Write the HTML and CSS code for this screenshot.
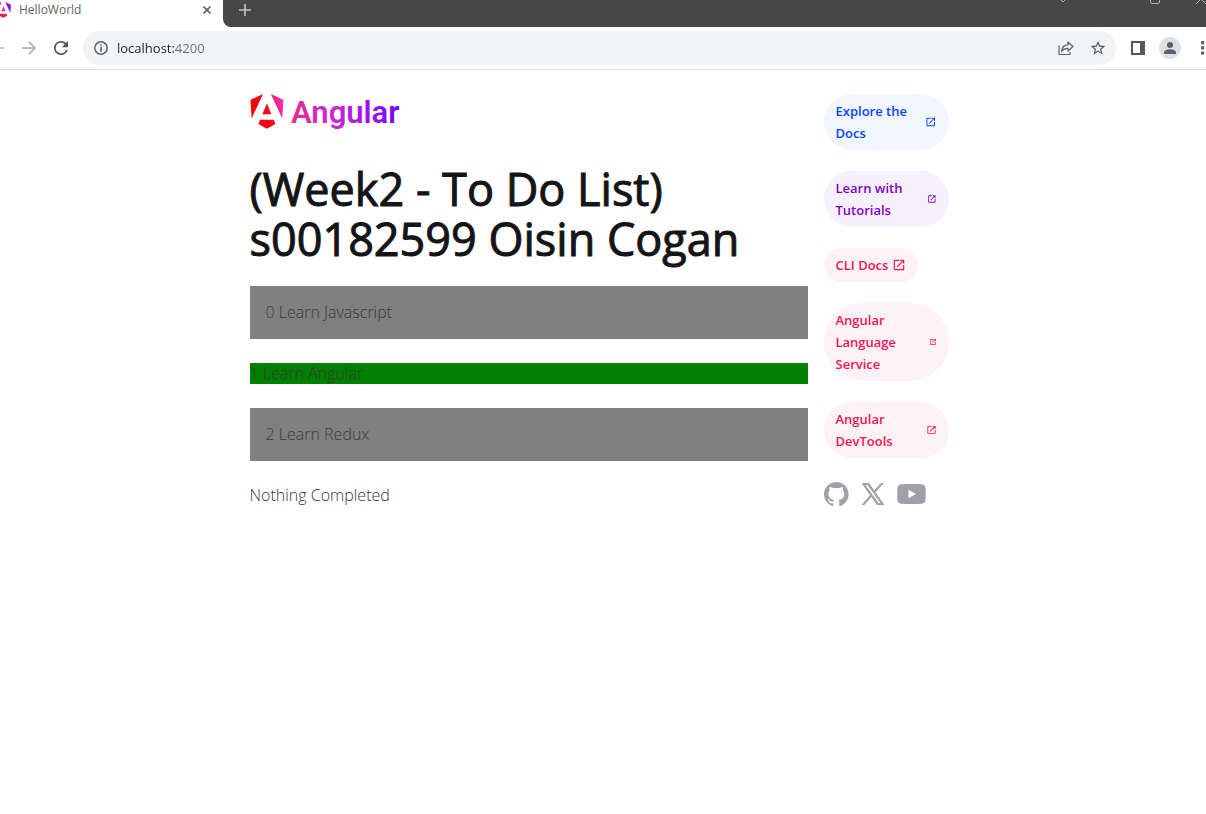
FILE: index.html
```html
<!DOCTYPE html>
<html lang="en">
<head>
<meta charset="utf-8">
<meta name="viewport" content="width=device-width, initial-scale=1">
<title>HelloWorld</title>
<link rel="stylesheet" href="styles.css">
</head>
<body>
<svg width="0" height="0" class="sprite" aria-hidden="true">
  <symbol id="external" viewBox="0 -960 960 960">
    <path d="M200-120q-33 0-56.5-23.5T120-200v-560q0-33 23.5-56.5T200-840h280v80H200v560h560v-280h80v280q0 33-23.5 56.5T760-120H200Zm188-212-56-56 372-372H560v-80h280v280h-80v-144L388-332Z"/>
  </symbol>
  <symbol id="shield" viewBox="0 0 223 236">
    <path d="m222.077 39.192-8.019 125.923L137.387 0l84.69 39.192Zm-53.105 162.825-57.933 33.056-57.934-33.056 11.783-28.556h92.301l11.783 28.556ZM111.039 62.675l30.357 73.803H80.681l30.358-73.803ZM7.937 165.115 0 39.192 84.69 0 7.937 165.115Z"/>
  </symbol>
</svg>

<header class="browser">
  <div class="tabstrip">
    <div class="tab">
      <svg class="favicon" viewBox="0 0 223 236" aria-hidden="true">
        <defs><linearGradient id="fav" x1="0" y1="1" x2="1" y2="0"><stop offset="0.2" stop-color="#f0083a"/><stop offset="0.5" stop-color="#e62bb0"/><stop offset="0.75" stop-color="#8514f5"/></linearGradient></defs>
        <use href="#shield" fill="url(#fav)"/>
      </svg>
      <span class="tab-title">HelloWorld</span>
      <button class="icon-btn tab-close" aria-label="Close tab"><svg width="8" height="8" viewBox="0 0 8 8"><path d="M.5.5l7 7M7.500.5l-7 7" stroke="#5f6368" stroke-width="1.600"/></svg></button>
    </div>
    <div class="strip-rest">
      <button class="icon-btn" aria-label="New tab"><svg width="12" height="12" viewBox="0 0 12 12"><path d="M6 0v12M0 6h12" stroke="#c4c4c4" stroke-width="1.600"/></svg></button>
      <div class="window-controls">
        <button class="icon-btn" aria-label="Search tabs"><svg width="10" height="10" viewBox="0 0 10 10"><path d="M1 4l4 4 4-4" fill="none" stroke="#b4b4b4"/></svg></button>
        <button class="icon-btn" aria-label="Maximize"><svg width="10" height="10" viewBox="0 0 10 10"><rect x=".5" y=".5" width="9" height="9" rx="1.500" fill="none" stroke="#b4b4b4"/></svg></button>
        <button class="icon-btn" aria-label="Close window"><svg width="10" height="10" viewBox="0 0 10 10"><path d="M0 0l10 10M10 0L0 10" stroke="#b4b4b4"/></svg></button>
      </div>
    </div>
  </div>
  <div class="toolbar">
    <button class="icon-btn back" aria-label="Back"><svg width="14" height="14" viewBox="0 0 14 14"><path d="M14 7H1M7 1L1 7l6 6" fill="none" stroke="#b5b7ba" stroke-width="1.600"/></svg></button>
    <button class="icon-btn forward" aria-label="Forward"><svg width="14" height="14" viewBox="0 0 14 14"><path d="M0 7h13M7 1l6 6-6 6" fill="none" stroke="#b5b7ba" stroke-width="1.800"/></svg></button>
    <button class="icon-btn reload" aria-label="Reload"><svg width="14" height="14" viewBox="4 4 16 16"><path fill="#54585d" d="M17.650 6.350A7.950 7.950 0 0 0 12 4a8 8 0 1 0 7.730 10h-2.080A6 6 0 1 1 12 6c1.660 0 3.140.69 4.220 1.780L13 11h7V4l-2.350 2.350z"/></svg></button>
    <div class="omnibox">
      <svg width="14" height="14" viewBox="0 0 14 14" aria-hidden="true"><circle cx="7" cy="7" r="6.200" fill="none" stroke="#5f6368" stroke-width="1.500"/><path d="M7 3.200v1.600M7 6v4.800" stroke="#5f6368" stroke-width="1.700"/></svg>
      <input class="address" type="text" aria-label="Address" value="localhost:4200">
      <button class="icon-btn" aria-label="Share"><svg width="16" height="14" viewBox="0 0 16 14"><path d="M1 4.500v9h11V11M10 1l5 4.500L10 10V7.400C7 7.300 5 8.300 3.600 10.300 4 6.700 6.300 4.100 10 3.700z" fill="none" stroke="#5f6368" stroke-width="1.200" stroke-linejoin="round"/></svg></button>
      <button class="icon-btn" aria-label="Bookmark"><svg width="16" height="16" viewBox="1 1 22 22"><path fill="#54585d" d="M22 9.240l-7.190-.62L12 2 9.190 8.630 2 9.240l5.460 4.730L5.820 21 12 17.270 18.180 21l-1.630-7.030L22 9.240zM12 15.400l-3.760 2.270 1-4.280-3.320-2.880 4.380-.38L12 6.100l1.710 4.040 4.380.38-3.320 2.880 1 4.280L12 15.400z"/></svg></button>
    </div>
    <button class="icon-btn panel" aria-label="Side panel"><svg width="14" height="14" viewBox="0 0 14 14"><path fill="#54585d" fill-rule="evenodd" d="M0 0h14v14H0zM2 2v10h7V2z"/></svg></button>
    <button class="icon-btn profile" aria-label="Profile"><svg width="22" height="22" viewBox="0 0 22 22"><circle cx="11" cy="11" r="11" fill="#dde1e7"/><circle cx="11" cy="8" r="3" fill="#56606f"/><path d="M5 17v-1.500C5 13 8.500 12.200 11 12.200s6 .8 6 3.300V17z" fill="#56606f"/></svg></button>
    <button class="icon-btn menu" aria-label="Menu"><svg width="4" height="14" viewBox="0 0 4 14"><path fill="#5f6368" d="M0 0h3.200v3.200H0zM0 5.200h3.200v3.200H0zM0 10.400h3.200v3.200H0z"/></svg></button>
  </div>
</header>

<main class="main">
  <section class="left">
    <svg class="logo" width="150" height="38" viewBox="0 0 150 38" role="img" aria-label="Angular">
      <defs>
        <linearGradient id="mark" x1="0" y1="0.500" x2="1" y2="0.100"><stop offset="0.400" stop-color="#f0060b"/><stop offset="1" stop-color="#f637d0"/></linearGradient>
        <linearGradient id="word" gradientUnits="userSpaceOnUse" x1="41" y1="34" x2="148" y2="20"><stop offset="0" stop-color="#e62b8b"/><stop offset="0.400" stop-color="#cc26d5"/><stop offset="1" stop-color="#7702ff"/></linearGradient>
      </defs>
      <use href="#shield" width="34" height="35" fill="url(#mark)"/>
      <text class="wordmark" x="41" y="29" fill="url(#word)">Angular</text>
    </svg>
    <h1 class="title">(Week2 - To Do List) s00182599 Oisin Cogan</h1>
    <ul class="todos">
      <li class="todo">0 Learn Javascript</li>
      <li class="todo done">1 Learn Angular</li>
      <li class="todo">2 Learn Redux</li>
    </ul>
    <p class="status">Nothing Completed</p>
  </section>
  <aside class="right">
    <nav class="pills">
      <a class="pill blue" href="#"><span>Explore the Docs</span><svg width="14" height="14"><use href="#external"/></svg></a>
      <a class="pill violet" href="#"><span>Learn with Tutorials</span><svg width="14" height="14"><use href="#external"/></svg></a>
      <a class="pill red" href="#"><span>CLI Docs</span><svg width="14" height="14"><use href="#external"/></svg></a>
      <a class="pill red" href="#"><span>Angular Language Service</span><svg width="14" height="14"><use href="#external"/></svg></a>
      <a class="pill red" href="#"><span>Angular DevTools</span><svg width="14" height="14"><use href="#external"/></svg></a>
    </nav>
    <div class="social">
      <a href="#" aria-label="Github"><svg width="25" height="24" viewBox="0 0 25 24"><path d="M12.3047 0C5.50634 0 0 5.50942 0 12.3047C0 17.7423 3.52529 22.3535 8.41332 23.9787C9.02856 24.0946 9.25414 23.7142 9.25414 23.3871C9.25414 23.0949 9.24389 22.3207 9.23876 21.2953C5.81601 22.0377 5.09414 19.6444 5.09414 19.6444C4.53427 18.2243 3.72524 17.8449 3.72524 17.8449C2.61064 17.082 3.81137 17.0973 3.81137 17.0973C5.04697 17.1835 5.69604 18.3647 5.69604 18.3647C6.79321 20.2463 8.57636 19.7029 9.27978 19.3881C9.39052 18.5924 9.70736 18.0499 10.0591 17.7423C7.32641 17.4347 4.45429 16.3765 4.45429 11.6618C4.45429 10.3185 4.9311 9.22133 5.72065 8.36C5.58222 8.04931 5.16694 6.79833 5.82831 5.10337C5.82831 5.10337 6.85883 4.77319 9.2121 6.36459C10.1965 6.09082 11.2424 5.95546 12.2883 5.94931C13.3342 5.95546 14.3801 6.09082 15.3644 6.36459C17.7023 4.77319 18.7328 5.10337 18.7328 5.10337C19.3942 6.79833 18.9789 8.04931 18.8559 8.36C19.6403 9.22133 20.1171 10.3185 20.1171 11.6618C20.1171 16.3888 17.2409 17.4296 14.5031 17.7321C14.9338 18.1012 15.3337 18.8559 15.3337 20.0084C15.3337 21.6552 15.3183 22.978 15.3183 23.3779C15.3183 23.7009 15.5336 24.0854 16.1642 23.9623C21.0871 22.3484 24.6094 17.7341 24.6094 12.3047C24.6094 5.50942 19.0999 0 12.3047 0Z"/></svg></a>
      <a href="#" aria-label="X"><svg class="x-logo" width="22" height="22" viewBox="0 0 24 24"><path d="M14.2833 10.1571L23.2178 0H21.1007L13.3427 8.81931L7.14656 0H0L9.36984 13.3364L0 23.9877H2.11732L10.3098 14.6742L16.8534 23.9877H24L14.2828 10.1571ZM11.3833 13.4538L10.4339 12.1258L2.87991 1.55881H6.13192L12.2282 10.0867L13.1776 11.4147L21.1017 22.4998H17.8497L11.3833 13.4543Z"/></svg></a>
      <a href="#" aria-label="Youtube"><svg width="29" height="20" viewBox="0 0 29 20"><path fill-rule="evenodd" d="M27.500 1.500C28.200 2.200 28.700 3.300 28.700 6.500v7c0 3.200-.5 4.300-1.200 5-1 1-2.500 1.200-4 1.300C18 20.100 11 20.100 5.500 19.800c-1.500-.1-3-.3-4-1.300-.7-.7-1.200-1.800-1.200-5v-7c0-3.200.5-4.300 1.200-5C2.500.5 4 .3 5.500.2 11-.1 18-.1 23.500.2c1.500.1 3 .3 4 1.300zM11.500 5.700v8.600l7.400-4.300z"/></svg></a>
    </div>
  </aside>
</main>
</body>
</html>
```
FILE: styles.css
```css
* { box-sizing: border-box; }
body {
  margin: 0;
  background: #fff;
  font-family: "Open Sans", "Noto Sans", sans-serif;
  overflow-x: hidden;
}
.sprite { position: absolute; }
.icon-btn {
  display: flex;
  padding: 0;
  border: 0;
  background: none;
  flex: none;
}

.browser { border-bottom: 1px solid #dadce0; }
.tabstrip { display: flex; height: 27px; overflow: hidden; background: #fff; }
.tab { display: flex; align-items: center; width: 223px; height: 20px; padding-right: 12px; }
.favicon { width: 15px; height: 16px; margin-left: -4px; flex: none; }
.tab-title { flex: 1; margin-left: 8px; font-size: 12px; line-height: 16px; color: #5f6368; }
.strip-rest {
  display: flex;
  flex: 1;
  align-items: flex-start;
  justify-content: space-between;
  padding: 4px 0 0 16px;
  background: #474747;
  border-bottom-left-radius: 8px;
}
.window-controls { display: flex; gap: 36px; margin: -10px 0 0; }
.window-controls .icon-btn:first-child { margin-right: 46px; }
.toolbar { display: flex; align-items: center; height: 42px; }
.back { margin-left: -10px; }
.forward { margin-left: 18px; }
.reload { margin-left: 18px; }
.omnibox {
  display: flex;
  flex: 1;
  align-items: center;
  gap: 16px;
  height: 34px;
  margin: 0 15px;
  padding: 0 10px 0 11px;
  border-radius: 17px;
  background: #f1f3f4;
}
.address {
  flex: 1;
  min-width: 0;
  margin-left: -7px;
  padding: 0;
  border: 0;
  font: 13px/20px "Open Sans", sans-serif;
  color: transparent;
  background: linear-gradient(90deg, #202124 58px, #6a6e73 58px);
  background-clip: text;
  -webkit-background-clip: text;
}
.profile { margin-left: 14px; }
.menu { margin: 0 1px 0 20px; }

.main {
  display: grid;
  grid-template-columns: 1fr 125px;
  gap: 16px;
  max-width: 707px;
  margin: 24px auto 0;
  padding-right: 8px;
}
.left { min-width: 0; }
.logo { display: block; }
.wordmark { font: 600 31px Roboto, sans-serif; }
.title {
  margin: 32px 0 22px;
  font-size: 45px;
  line-height: 50px;
  font-weight: 500;
  color: #151417;
  -webkit-text-stroke: 1px #151417;
}
.todos { display: grid; gap: 24px; margin: 0; padding: 0; list-style: none; }
.todo, .status { font-size: 16px; line-height: 21px; font-weight: 300; color: #38363d; }
.todo { padding: 16px; background: #808080; }
.done { padding: 0; background: #008000; }
.status { margin: 24px 0; }

.pills { display: flex; flex-direction: column; align-items: flex-start; gap: 21px; }
.pill {
  display: flex;
  align-items: center;
  gap: 4px;
  padding: 6px 12px;
  border-radius: 44px;
  font-size: 13px;
  line-height: 22px;
  font-weight: 600;
  text-decoration: none;
}
.pill svg { fill: currentColor; min-width: 0; flex-shrink: 1; }
.blue { color: #0546ff; background: #f1f6ff; }
.violet { color: #8001c6; background: #f6f1fc; }
.red { color: #f11653; background: #fef2f6; }
.social { display: flex; align-items: center; gap: 13px; margin-top: 24px; }
.social a { display: flex; }
.social svg { fill: #a19fa8; }
.x-logo { stroke: #a19fa8; }
```
